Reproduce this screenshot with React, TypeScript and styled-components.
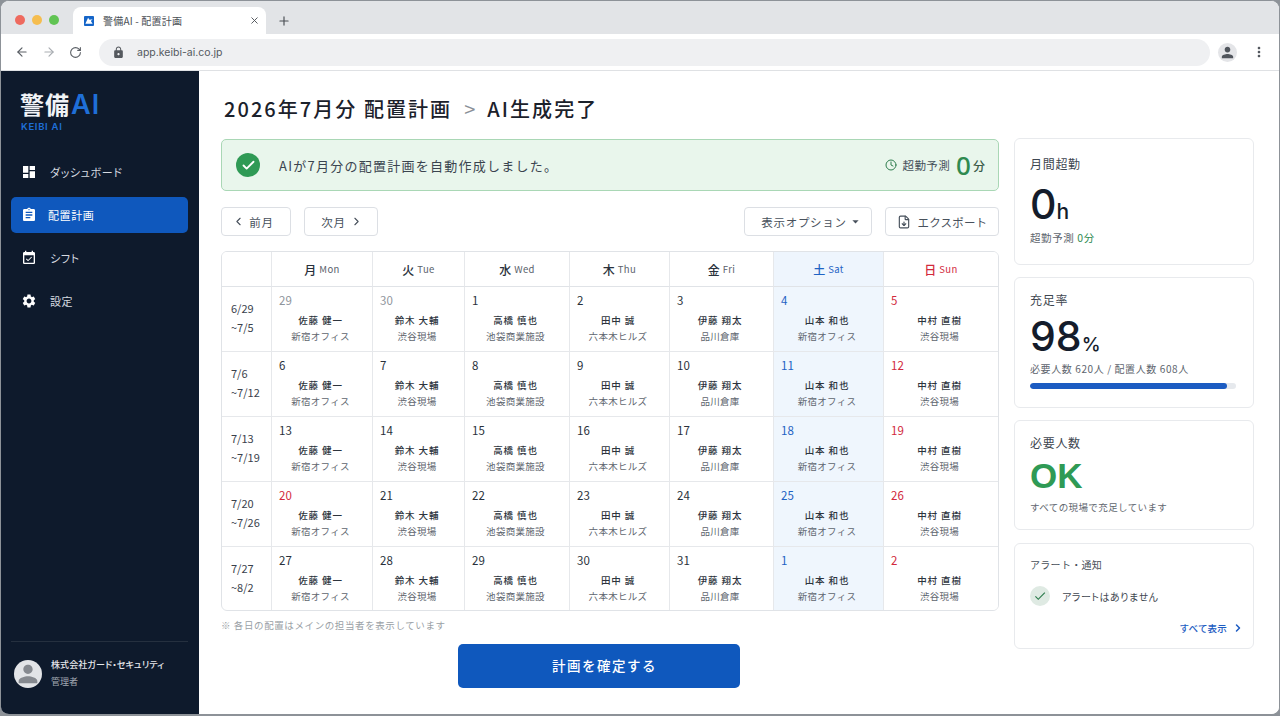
import React from 'react';
import styled, { createGlobalStyle } from 'styled-components';
import { ArrowLeft, ArrowRight, RotateCw, ChevronLeft, ChevronRight, Clock, FileDown, Check, Plus, X } from 'lucide-react';
import { MdDashboard, MdAssignment, MdEventAvailable, MdSettings, MdLock, MdPerson, MdMoreVert, MdCheck, MdArrowDropDown } from 'react-icons/md';

const GlobalStyle = createGlobalStyle`
  html, body {
    margin: 0;
    padding: 0;
    background: #8d9298;
  }
  body {
    font-family: "Noto Sans CJK JP", "Noto Sans", sans-serif;
    color: #1c2430;
  }
  * {
    box-sizing: border-box;
  }
`;

const Window = styled.div`
  width: 1280px;
  height: 716px;
  display: flex;
  flex-direction: column;
  overflow: hidden;
  border: 1px solid #8d9298;
  border-bottom-width: 2px;
  border-radius: 9px;
  background: #fff;
`;

/* browser chrome */
const TabStrip = styled.div`
  height: 33px;
  flex: none;
  display: flex;
  align-items: flex-end;
  background: #e2e4e7;
`;

const TrafficLights = styled.div`
  display: flex;
  gap: 7px;
  padding: 0 0 9px 14px;
  width: 72px;
`;

const Light = styled.span<{ $color: string }>`
  width: 10px;
  height: 10px;
  border-radius: 50%;
  background: ${(p) => p.$color};
`;

const Tab = styled.div`
  width: 193px;
  height: 27px;
  display: flex;
  align-items: center;
  padding: 0 6px 0 11px;
  background: #fff;
  border-radius: 8px 8px 0 0;
  font-size: 10px;
  letter-spacing: 0.2px;
  color: #4a4f55;
`;

const TabTitle = styled.span`
  flex: 1;
  margin-left: 9px;
`;

const NewTab = styled.div`
  display: flex;
  align-items: center;
  color: #4a4f55;
  padding: 0 0 6px 11px;
`;

const Toolbar = styled.div`
  height: 37px;
  flex: none;
  display: flex;
  align-items: center;
  padding: 0 12px 0 14px;
  background: #fff;
  border-bottom: 1px solid #dfe1e4;
`;

const NavButtons = styled.div`
  display: flex;
  align-items: center;
  gap: 13px;
  color: #5a5f65;
  width: 84px;
`;

const Omnibox = styled.div`
  width: 1111px;
  height: 27px;
  flex: none;
  display: flex;
  align-items: center;
  gap: 12px;
  padding: 0 13px;
  background: #eff0f2;
  border-radius: 14px;
  font-family: "Inter", sans-serif;
  font-size: 10.5px;
  color: #54595f;
`;

const ProfileIcon = styled.div`
  width: 19px;
  height: 19px;
  margin-left: 8px;
  display: flex;
  align-items: center;
  justify-content: center;
  border-radius: 50%;
  background: #e4e5e8;
  color: #50555c;
`;

const MenuIcon = styled.div`
  margin-left: 14px;
  display: flex;
  color: #50555c;
`;

/* app */
const Body = styled.div`
  flex: 1;
  min-height: 0;
  display: flex;
`;

const Sidebar = styled.aside`
  width: 198px;
  flex: none;
  display: flex;
  flex-direction: column;
  background: #0e1a2c;
  padding: 19px 11px 0 10px;
`;

const Logo = styled.div`
  padding-left: 9px;
  font-size: 24px;
  font-weight: 700;
  line-height: 28px;
  color: #f2f4f7;
  letter-spacing: 1px;
`;

const LogoAccent = styled.span`
  font-family: "Inter", sans-serif;
  font-size: 27px;
  font-weight: 600;
  color: #1f6fd8;
  margin-left: 1px;
`;

const LogoSub = styled.div`
  padding-left: 10px;
  margin-top: 2px;
  font-family: "Inter", sans-serif;
  font-size: 9.5px;
  font-weight: 600;
  letter-spacing: 0.7px;
  color: #1f6fd8;
`;

const Nav = styled.nav`
  margin-top: 22px;
  display: flex;
  flex-direction: column;
  gap: 7px;
`;

const NavItem = styled.div<{ $active?: boolean }>`
  height: 36px;
  display: flex;
  align-items: center;
  gap: ${(p) => (p.$active ? '11px' : '13px')};
  padding-left: 10px;
  border-radius: 5px;
  font-size: 11px;
  font-feature-settings: "palt";
  letter-spacing: 0.6px;
  color: ${(p) => (p.$active ? '#fff' : '#d6dae0')};
  background: ${(p) => (p.$active ? '#0f58bd' : 'transparent')};
`;

const SidebarFooter = styled.div`
  margin-top: auto;
  height: 73px;
  display: flex;
  align-items: center;
  gap: 9px;
  padding: 0 0 8px 3px;
  border-top: 1px solid #25303f;
`;

const Avatar = styled.div`
  width: 28px;
  height: 28px;
  border-radius: 50%;
  background: #e2e4e7;
  display: flex;
  align-items: center;
  justify-content: center;
  color: #85898f;
  overflow: hidden;
`;

const CompanyInfo = styled.div`
  padding-bottom: 3px;
`;

const CompanyName = styled.div`
  font-size: 9px;
  font-weight: 500;
  line-height: 13px;
  font-feature-settings: "palt";
  letter-spacing: 0.1px;
  color: #e6e8ec;
`;

const RoleName = styled.div`
  margin-top: 4px;
  font-size: 9px;
  line-height: 13px;
  color: #a1a8b2;
`;

const Main = styled.main`
  flex: 1;
  min-width: 0;
  padding: 23px 0 0 22px;
  background: #fff;
`;

const Title = styled.h1`
  margin: 0 0 16px 3px;
  height: 28px;
  display: flex;
  align-items: center;
  font-size: 20px;
  font-weight: 500;
  letter-spacing: 2.05px;
  color: #1b212b;
`;

const TitleSep = styled.span`
  margin: 0 10px 0 12px;
  font-weight: 400;
  color: #8a9098;
`;

const Columns = styled.div`
  display: grid;
  grid-template-columns: 778px 240px;
  column-gap: 15px;
`;

const Left = styled.div`
  display: flex;
  flex-direction: column;
  padding-top: 1px;
`;

const Banner = styled.div`
  height: 52px;
  display: flex;
  align-items: center;
  padding: 0 13px 0 14px;
  background: #e9f6ec;
  border: 1px solid #a9d7b5;
  border-radius: 5px;
`;

const BannerCheck = styled.div`
  width: 24px;
  height: 24px;
  border-radius: 50%;
  display: flex;
  align-items: center;
  justify-content: center;
  background: #2f9a55;
  color: #fff;
`;

const BannerText = styled.div`
  flex: 1;
  margin-left: 19px;
  font-size: 13px;
  letter-spacing: 1.25px;
  color: #3a444f;
`;

const ForecastLabel = styled.span`
  margin-left: 6px;
  font-size: 11.5px;
  letter-spacing: 0.4px;
  color: #46505a;
`;

const Forecast = styled.div`
  display: flex;
  align-items: center;
  color: #2f7d4e;
`;

const ForecastValue = styled.span`
  margin-left: 6px;
  font-family: "Noto Sans", sans-serif;
  font-size: 26px;
  font-weight: 500;
  line-height: 24px;
  color: #2f8a50;
`;

const ForecastUnit = styled.span`
  margin-left: 2px;
  font-size: 12px;
  font-weight: 500;
  color: #3a5a48;
`;

const ActionRow = styled.div`
  margin-top: 16px;
  display: flex;
  align-items: center;
  gap: 13px;
`;

const ActionButton = styled.button<{ $width: number; $push?: boolean; $left?: number; $right?: number; $gap?: number; $tight?: boolean }>`
  width: ${(p) => p.$width}px;
  height: 29px;
  padding: 0 ${(p) => p.$right ?? 0}px 0 ${(p) => p.$left ?? 0}px;
  display: flex;
  align-items: center;
  justify-content: center;
  gap: ${(p) => p.$gap ?? 4}px;
  margin-left: ${(p) => (p.$push ? 'auto' : '0')};
  background: #fff;
  border: 1px solid #dcdfe4;
  border-radius: 4px;
  font-family: inherit;
  font-size: 11.5px;
  letter-spacing: ${(p) => (p.$tight ? '0.2px' : '0.7px')};
  color: #48515c;
`;

const Calendar = styled.div`
  margin-top: 15px;
  display: grid;
  grid-template-columns: 50px 101px 92px 105px 100px 104px 110px 1fr;
  grid-template-rows: 35px repeat(4, 65px) 63px;
  border: 1px solid #e0e3e7;
  border-radius: 6px;
  overflow: hidden;
`;

const HeadCell = styled.div<{ $tone?: string }>`
  display: flex;
  align-items: center;
  justify-content: center;
  gap: 3px;
  border-right: 1px solid #e6e8eb;
  border-bottom: 1px solid #e0e3e7;
  font-size: 12px;
  font-weight: 500;
  color: ${(p) => (p.$tone === 'sat' ? '#1f63c4' : p.$tone === 'sun' ? '#d2293d' : '#2a313b')};
  background: ${(p) => (p.$tone === 'sat' ? '#eef5fd' : '#fff')};
  &:nth-child(8) {
    border-right: 0;
  }
`;

const HeadEn = styled.span<{ $tone?: string }>`
  font-size: 9.5px;
  font-weight: 400;
  letter-spacing: 0.4px;
  color: ${(p) => (p.$tone ? 'inherit' : '#59616b')};
`;

const WeekCell = styled.div`
  padding: 12px 0 0 9px;
  border-right: 1px solid #e6e8eb;
  border-bottom: 1px solid #e6e8eb;
  font-size: 11px;
  line-height: 19px;
  color: #3a424c;
  &:nth-last-child(8) {
    border-bottom: 0;
  }
`;

const DayCell = styled.div<{ $sat?: boolean }>`
  display: flex;
  flex-direction: column;
  padding: 5px 0 0 0;
  border-right: 1px solid #e6e8eb;
  border-bottom: 1px solid #e6e8eb;
  background: ${(p) => (p.$sat ? '#eff6fd' : '#fff')};
  &:nth-child(8n) {
    border-right: 0;
  }
  &:nth-last-child(-n + 7) {
    border-bottom: 0;
  }
`;

const DayNumber = styled.div<{ $color: string }>`
  padding-left: 7px;
  font-size: 11.5px;
  line-height: 16px;
  color: ${(p) => p.$color};
`;

const PersonName = styled.div`
  margin-top: 4px;
  padding-right: 3px;
  text-align: center;
  font-size: 9.5px;
  font-weight: 500;
  line-height: 16px;
  letter-spacing: 0.9px;
  color: #2d343d;
`;

const SiteName = styled.div`
  padding-right: 3px;
  text-align: center;
  font-size: 9.5px;
  line-height: 16px;
  letter-spacing: 0.3px;
  color: #5e656e;
`;

const Note = styled.div`
  margin-top: 7px;
  font-size: 9.5px;
  line-height: 14px;
  letter-spacing: 0.6px;
  color: #9a9fa6;
`;

const ConfirmRow = styled.div`
  margin-top: 12px;
  padding-right: 23px;
  display: flex;
  justify-content: center;
`;

const ConfirmButton = styled.button`
  width: 282px;
  height: 44px;
  padding: 0 0 2px 12px;
  background: #0f58bd;
  border: 0;
  border-radius: 5px;
  font-family: inherit;
  font-size: 13.5px;
  font-weight: 500;
  letter-spacing: 1.5px;
  color: #fff;
`;

const Right = styled.div`
  display: flex;
  flex-direction: column;
`;

const Card = styled.section<{ $height: number; $gap: number; $top: number }>`
  height: ${(p) => p.$height}px;
  margin-bottom: ${(p) => p.$gap}px;
  padding: ${(p) => p.$top}px 9px 0 15px;
  background: #fff;
  border: 1px solid #e8eaed;
  border-radius: 6px;
`;

const CardLabel = styled.div`
  font-size: 12px;
  line-height: 18px;
  letter-spacing: 0.7px;
  color: #3e4650;
`;

const BigValue = styled.div<{ $top: number }>`
  margin-top: ${(p) => p.$top}px;
  font-family: "Inter", sans-serif;
  font-size: 41px;
  font-weight: 500;
  line-height: 34px;
  color: #141c2b;
`;

const BigUnit = styled.span<{ $size: number }>`
  font-size: ${(p) => p.$size}px;
  font-weight: 500;
`;

const OkValue = styled.div`
  margin-top: 3px;
  font-family: "Liberation Sans", sans-serif;
  font-size: 35px;
  font-weight: 700;
  line-height: 42px;
  color: #2f9a55;
`;

const CardSub = styled.div<{ $top: number; $size?: number; $spacing?: number }>`
  margin-top: ${(p) => p.$top}px;
  font-size: ${(p) => p.$size ?? 9.5}px;
  line-height: 14px;
  letter-spacing: ${(p) => p.$spacing ?? 0.4}px;
  color: #5e656e;
`;

const SubGreen = styled.span`
  color: #2f8a50;
`;

const Bar = styled.div`
  margin-top: 7px;
  width: 206px;
  height: 6px;
  border-radius: 3px;
  overflow: hidden;
  background: #e6e9ed;
`;

const BarFill = styled.div`
  height: 100%;
  border-radius: 3px;
  background: #1c5cc2;
`;

const AlertLabel = styled.div`
  font-size: 10px;
  line-height: 16px;
  letter-spacing: 0.3px;
  color: #474f59;
`;

const AlertRow = styled.div`
  margin-top: 13px;
  display: flex;
  align-items: center;
  gap: 12px;
  font-size: 10px;
  font-feature-settings: "palt";
  letter-spacing: 0.5px;
  color: #3e4650;
`;

const AlertBadge = styled.div`
  width: 20px;
  height: 20px;
  border-radius: 50%;
  display: flex;
  align-items: center;
  justify-content: center;
  background: #dfeae3;
  color: #2f7d4e;
`;

const SeeAll = styled.div`
  margin-top: 15px;
  display: flex;
  justify-content: flex-end;
  align-items: center;
  gap: 5px;
  font-size: 9.5px;
  font-weight: 500;
  letter-spacing: 0.2px;
  color: #1c5cc2;
`;

const heads = [
  { ja: '月', en: 'Mon' },
  { ja: '火', en: 'Tue' },
  { ja: '水', en: 'Wed' },
  { ja: '木', en: 'Thu' },
  { ja: '金', en: 'Fri' },
  { ja: '土', en: 'Sat', tone: 'sat' },
  { ja: '日', en: 'Sun', tone: 'sun' },
];

const staff = [
  { name: '佐藤 健一', site: '新宿オフィス' },
  { name: '鈴木 大輔', site: '渋谷現場' },
  { name: '高橋 慎也', site: '池袋商業施設' },
  { name: '田中 誠', site: '六本木ヒルズ' },
  { name: '伊藤 翔太', site: '品川倉庫' },
  { name: '山本 和也', site: '新宿オフィス' },
  { name: '中村 直樹', site: '渋谷現場' },
];

const weeks = [
  { from: '6/29', to: '~7/5', days: [29, 30, 1, 2, 3, 4, 5] },
  { from: '7/6', to: '~7/12', days: [6, 7, 8, 9, 10, 11, 12] },
  { from: '7/13', to: '~7/19', days: [13, 14, 15, 16, 17, 18, 19] },
  { from: '7/20', to: '~7/26', days: [20, 21, 22, 23, 24, 25, 26] },
  { from: '7/27', to: '~8/2', days: [27, 28, 29, 30, 31, 1, 2] },
];

const dayColor = (weekIndex: number, dayIndex: number) => {
  if (weekIndex === 0 && dayIndex < 2) return '#8f959c';
  if (dayIndex === 5) return '#1f63c4';
  if (dayIndex === 6) return '#d2293d';
  // 7/20 is a holiday
  if (weekIndex === 3 && dayIndex === 0) return '#d2293d';
  return '#2a313b';
};

const fillRate = 95.5;

const Favicon = () => (
  <svg width="10" height="10" viewBox="0 0 11 11">
    <rect width="11" height="11" rx="1" fill="#1565c8" />
    <path d="M1.5 8.5 L4.5 2 L6 4 L9.5 3.5 L7.5 5.5 L9.5 8.5 Z" fill="#fff" />
  </svg>
);

const App: React.FC = () => {
  return (
    <>
      <GlobalStyle />
      <Window>
        <TabStrip>
          <TrafficLights>
            <Light $color="#ee6a5f" />
            <Light $color="#f5bd4f" />
            <Light $color="#61c454" />
          </TrafficLights>
          <Tab>
            <Favicon />
            <TabTitle>警備AI - 配置計画</TabTitle>
            <X size={11} />
          </Tab>
          <NewTab>
            <Plus size={14} />
          </NewTab>
        </TabStrip>
        <Toolbar>
          <NavButtons>
            <ArrowLeft size={14} />
            <ArrowRight size={14} color="#a9adb2" />
            <RotateCw size={13} />
          </NavButtons>
          <Omnibox>
            <MdLock size={13} color="#55595f" />
            app.keibi-ai.co.jp
          </Omnibox>
          <ProfileIcon>
            <MdPerson size={17} />
          </ProfileIcon>
          <MenuIcon>
            <MdMoreVert size={16} />
          </MenuIcon>
        </Toolbar>
        <Body>
          <Sidebar>
            <Logo>
              警備<LogoAccent>AI</LogoAccent>
            </Logo>
            <LogoSub>KEIBI AI</LogoSub>
            <Nav>
              <NavItem>
                <MdDashboard size={16} color="#fff" />
                ダッシュボード
              </NavItem>
              <NavItem $active>
                <MdAssignment size={16} />
                配置計画
              </NavItem>
              <NavItem>
                <MdEventAvailable size={16} color="#fff" />
                シフト
              </NavItem>
              <NavItem>
                <MdSettings size={16} color="#fff" />
                設定
              </NavItem>
            </Nav>
            <SidebarFooter>
              <Avatar>
                <MdPerson size={28} />
              </Avatar>
              <CompanyInfo>
                <CompanyName>株式会社ガード・セキュリティ</CompanyName>
                <RoleName>管理者</RoleName>
              </CompanyInfo>
            </SidebarFooter>
          </Sidebar>
          <Main>
            <Title>
              2026年7月分 配置計画
              <TitleSep>&gt;</TitleSep>
              AI生成完了
            </Title>
            <Columns>
              <Left>
                <Banner>
                  <BannerCheck>
                    <Check size={15} strokeWidth={3} />
                  </BannerCheck>
                  <BannerText>AIが7月分の配置計画を自動作成しました。</BannerText>
                  <Forecast>
                    <Clock size={12} />
                    <ForecastLabel>超勤予測</ForecastLabel>
                    <ForecastValue>0</ForecastValue>
                    <ForecastUnit>分</ForecastUnit>
                  </Forecast>
                </Banner>
                <ActionRow>
                  <ActionButton $width={70} $right={6}>
                    <ChevronLeft size={13} />
                    前月
                  </ActionButton>
                  <ActionButton $width={74} $left={2}>
                    次月
                    <ChevronRight size={13} />
                  </ActionButton>
                  <ActionButton $width={128} $push $left={8} $gap={1}>
                    表示オプション
                    <MdArrowDropDown size={15} />
                  </ActionButton>
                  <ActionButton $width={114} $tight>
                    <FileDown size={14} />
                    &nbsp;エクスポート
                  </ActionButton>
                </ActionRow>
                <Calendar>
                  <HeadCell />
                  {heads.map((h) => (
                    <HeadCell key={h.en} $tone={h.tone}>
                      {h.ja} <HeadEn $tone={h.tone}>{h.en}</HeadEn>
                    </HeadCell>
                  ))}
                  {weeks.map((week, w) => (
                    <React.Fragment key={week.from}>
                      <WeekCell>
                        {week.from}
                        <br />
                        {week.to}
                      </WeekCell>
                      {week.days.map((day, d) => (
                        <DayCell key={d} $sat={d === 5}>
                          <DayNumber $color={dayColor(w, d)}>{day}</DayNumber>
                          <PersonName>{staff[d].name}</PersonName>
                          <SiteName>{staff[d].site}</SiteName>
                        </DayCell>
                      ))}
                    </React.Fragment>
                  ))}
                </Calendar>
                <Note>※ 各日の配置はメインの担当者を表示しています</Note>
                <ConfirmRow>
                  <ConfirmButton>計画を確定する</ConfirmButton>
                </ConfirmRow>
              </Left>
              <Right>
                <Card $height={127} $gap={12} $top={16}>
                  <CardLabel>月間超勤</CardLabel>
                  <BigValue $top={14}>
                    0<BigUnit $size={21}>h</BigUnit>
                  </BigValue>
                  <CardSub $top={2} $size={10.5} $spacing={0.6}>
                    超勤予測 <SubGreen>0分</SubGreen>
                  </CardSub>
                </Card>
                <Card $height={131} $gap={12} $top={13}>
                  <CardLabel>充足率</CardLabel>
                  <BigValue $top={10}>
                    98<BigUnit $size={19}>%</BigUnit>
                  </BigValue>
                  <CardSub $top={0} $size={10} $spacing={0.6}>
                    必要人数 620人 / 配置人数 608人
                  </CardSub>
                  <Bar>
                    <BarFill style={{ width: `${fillRate}%` }} />
                  </Bar>
                </Card>
                <Card $height={110} $gap={13} $top={13}>
                  <CardLabel>必要人数</CardLabel>
                  <OkValue>OK</OkValue>
                  <CardSub $top={3}>すべての現場で充足しています</CardSub>
                </Card>
                <Card $height={106} $gap={0} $top={13}>
                  <AlertLabel>アラート・通知</AlertLabel>
                  <AlertRow>
                    <AlertBadge>
                      <MdCheck size={14} />
                    </AlertBadge>
                    アラートはありません
                  </AlertRow>
                  <SeeAll>
                    すべて表示
                    <ChevronRight size={12} strokeWidth={3} />
                  </SeeAll>
                </Card>
              </Right>
            </Columns>
          </Main>
        </Body>
      </Window>
    </>
  );
};

export default App;
